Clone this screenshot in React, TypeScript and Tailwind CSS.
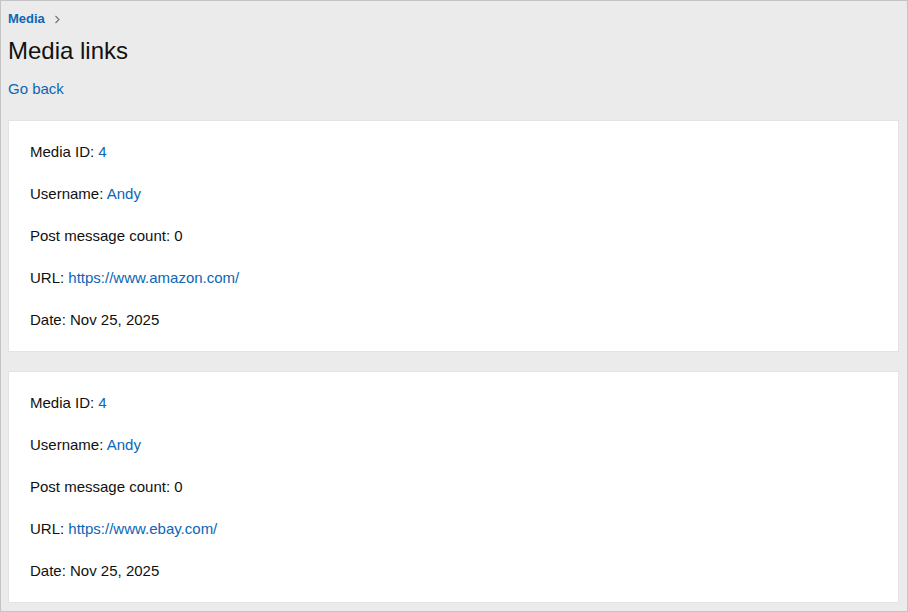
const items = [
  { id: 4, user: 'Andy', count: 0, url: 'https://www.amazon.com/', date: 'Nov 25, 2025' },
  { id: 4, user: 'Andy', count: 0, url: 'https://www.ebay.com/', date: 'Nov 25, 2025' },
]

function MediaCard({ item }: { item: (typeof items)[number] }) {
  return (
    <div className="bg-white border border-[#e3e3e3] px-[21px] py-[21px] flex flex-col gap-[22px] text-[15px] leading-5 text-[#111]">
      <div>
        Media ID: <a href="#" className="text-[#0b66b6]">{item.id}</a>
      </div>
      <div>
        Username: <a href="#" className="text-[#0b66b6]">{item.user}</a>
      </div>
      <div>Post message count: {item.count}</div>
      <div>
        URL: <a href="#" className="text-[#0b66b6]">{item.url}</a>
      </div>
      <div>Date: {item.date}</div>
    </div>
  )
}

export default function App() {
  return (
    <div className="h-[612px] w-[908px] overflow-hidden border border-[#c4c4c4] bg-[#ebebeb] pl-[7px] pr-[8px] pt-[10px] font-['Liberation_Sans',Arial,sans-serif]">
      {/* Breadcrumb */}
      <div className="flex items-center gap-[9px] h-4 text-[13px] leading-4">
        <a href="#" className="font-bold text-[#0b66b6]">Media</a>
        <svg width="7" height="9" viewBox="0 0 7 9" fill="none" className="mt-[1px]">
          <path d="M1.5 1l3.5 3.5L1.5 8" stroke="#777" strokeWidth="1.2" />
        </svg>
      </div>
      <h1 className="mt-[10px] text-[24px] leading-7 text-[#111]">Media links</h1>
      <a href="#" className="block mt-[14px] text-[15px] leading-5 text-[#0b66b6]">Go back</a>

      <div className="mt-[21px] flex flex-col gap-[19px]">
        {items.map((item, i) => (
          <MediaCard key={i} item={item} />
        ))}
      </div>
    </div>
  )
}
